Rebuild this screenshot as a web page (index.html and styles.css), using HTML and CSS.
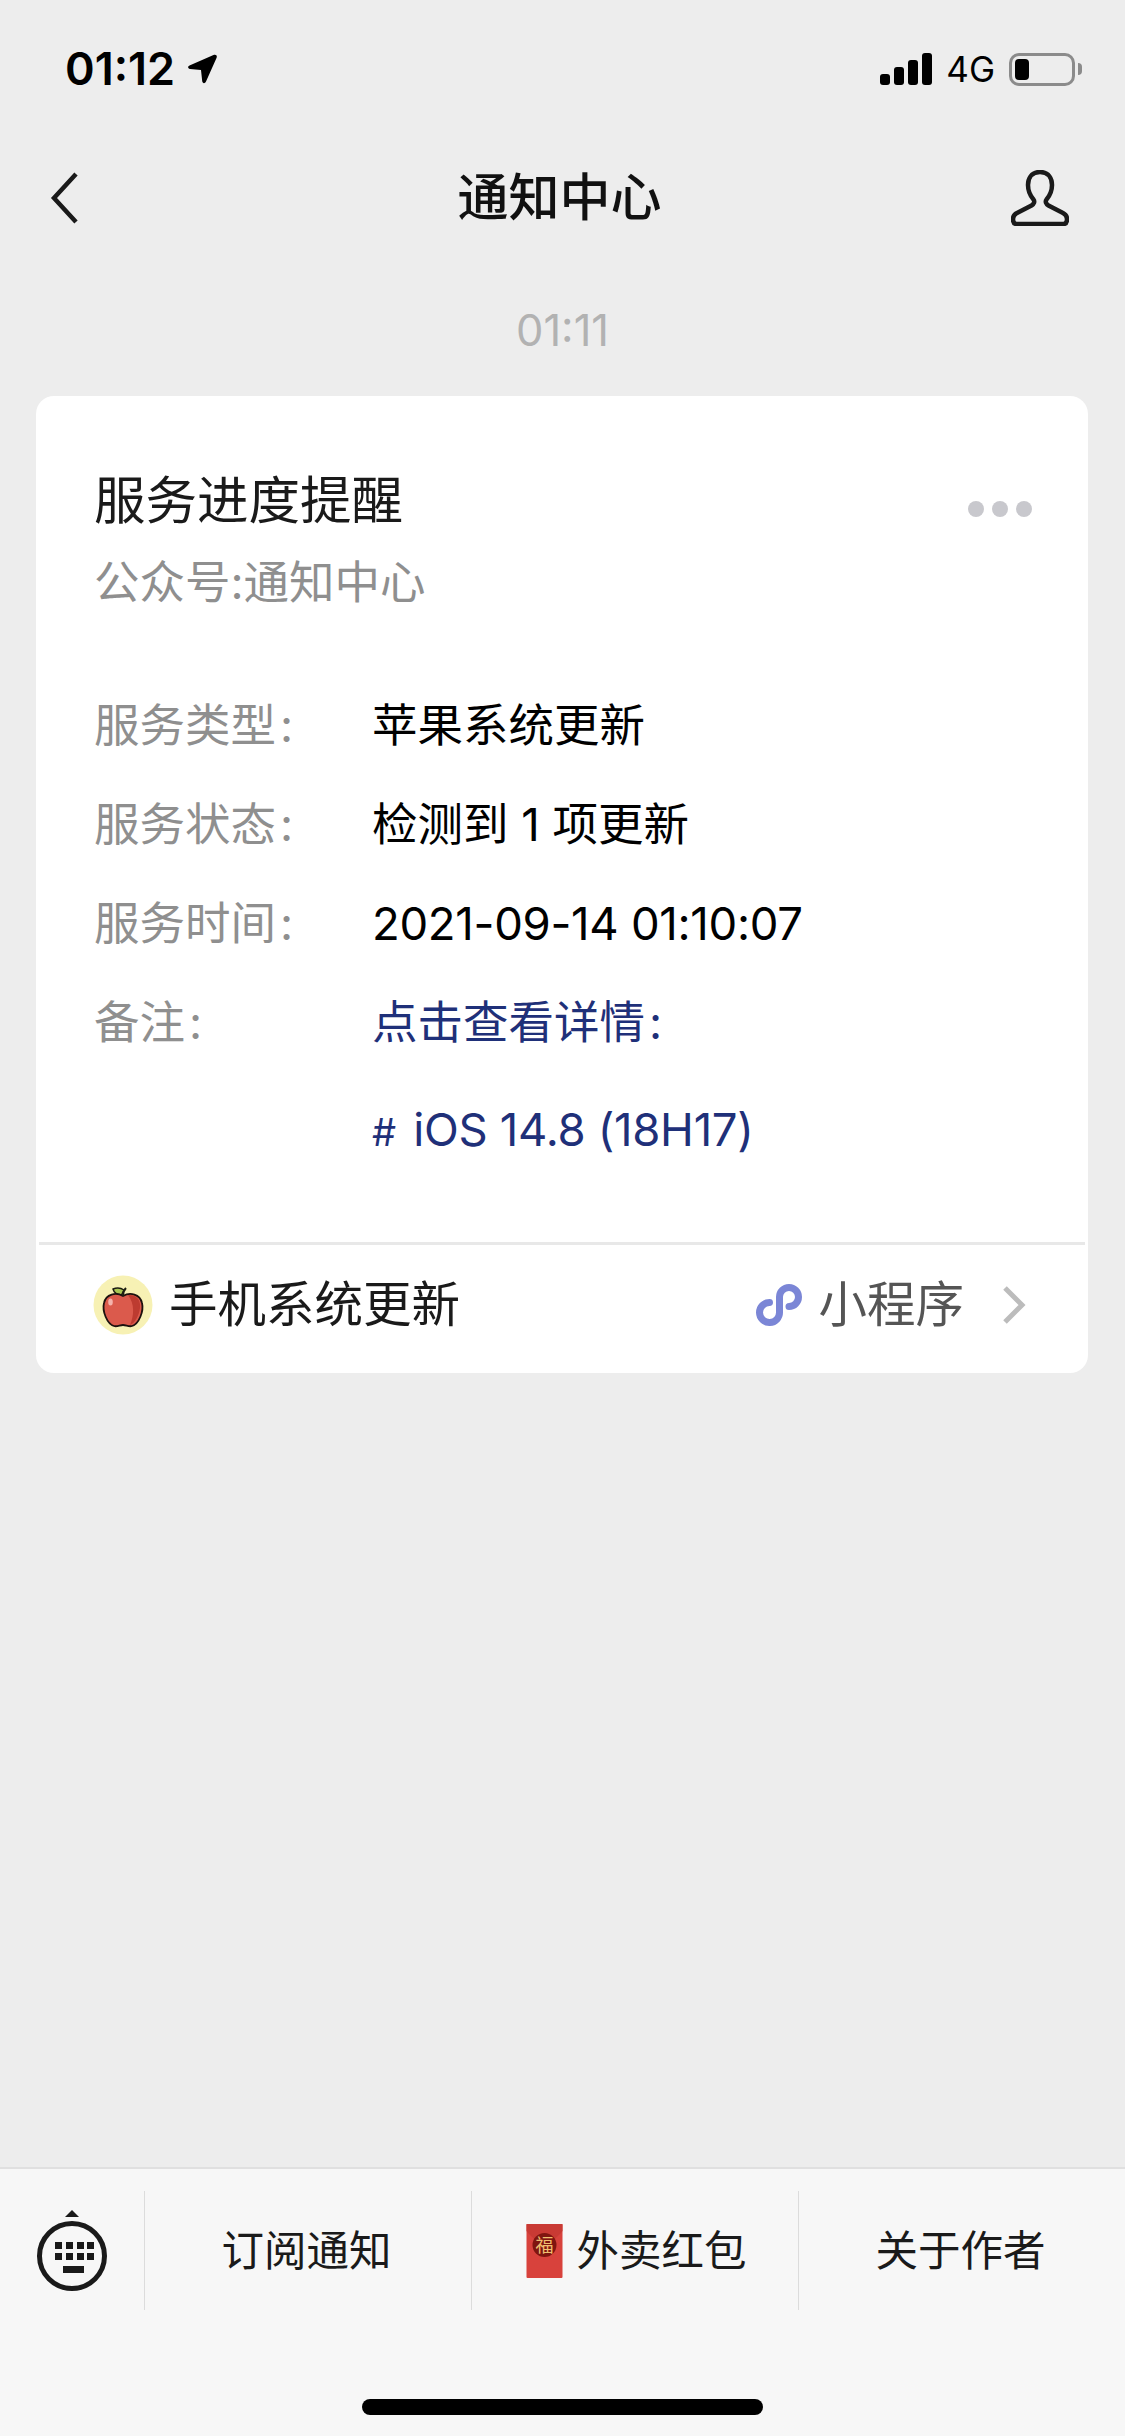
FILE: index.html
```html
<!DOCTYPE html>
<html lang="zh-CN">
<head>
<meta charset="utf-8">
<title>通知中心</title>
<link rel="stylesheet" href="styles.css">
</head>
<body>
<div class="phone">
  <header class="status">
    <div class="status-left">
      <span class="clock">01:12</span>
      <svg class="loc" viewBox="0 0 30 30"><path d="M1.500 11.500 25.500 1c2.500-1 4 .5 3 3L18 27.500c-1.200 2.500-3.500 2-3.800-.5L13 16l-11-1c-2.300-.3-2.500-2.500-.5-3.500z"/></svg>
    </div>
    <div class="status-right">
      <div class="signal"><i class="b1"></i><i class="b2"></i><i class="b3"></i><i class="b4"></i></div>
      <span class="net">4G</span>
      <div class="battery"><div class="battery-level"></div></div>
      <div class="battery-nub"></div>
    </div>
  </header>

  <nav class="nav">
    <svg class="back" viewBox="0 0 30 52"><path d="M26 2 4 26l22 24"/></svg>
    <h1 class="nav-title">通知中心</h1>
    <svg class="user" viewBox="0 0 58 56"><path d="M29 2c-9 0-12 7-12 13 0 6 2.500 11 5.500 14.500 1.500 2 .5 4.500-2 6L6 43c-3 1.500-4 3.500-4 6 0 3 .8 5 3.500 5h47c2.700 0 3.500-2 3.500-5 0-2.500-1-4.500-4-6l-14.500-7.500c-2.500-1.500-3.500-4-2-6C38.500 26 41 21 41 15c0-6-3-13-12-13z"/></svg>
  </nav>

  <div class="stamp">01:11</div>

  <section class="card">
    <div class="card-body">
      <div class="head">
        <div>
          <h2 class="title">服务进度提醒</h2>
          <p class="sub">公众号:通知中心</p>
        </div>
        <div class="dots"><i></i><i></i><i></i></div>
      </div>
      <dl class="rows">
        <dt class="label">服务类型<span class="colon">:</span></dt>
        <dd class="value">苹果系统更新</dd>
        <dt class="label">服务状态<span class="colon">:</span></dt>
        <dd class="value">检测到 1 项更新</dd>
        <dt class="label">服务时间<span class="colon">:</span></dt>
        <dd class="value num">2021-09-14 01:10:07</dd>
        <dt class="label">备注<span class="colon">:</span></dt>
        <dd class="value link">
          <div>点击查看详情<span class="colon">:</span></div>
          <div class="link-line num"><span class="hash">#</span> iOS 14.8 (18H17)</div>
        </dd>
      </dl>
    </div>
    <footer class="foot">
      <div class="app">
        <svg class="apple" viewBox="0 0 60 60">
          <circle cx="30" cy="30" r="29.500" fill="#f7f1b4"/>
          <path d="M31 15c-3-2-7-2.500-11-1 1 4 5 6 8.500 6z" fill="#a9c653" stroke="#1d1d12" stroke-width="1.500" stroke-linejoin="round"/>
          <path d="M30 21c-7-4-17-2-19 7-2 8 3 21 10 23 3 1 6-1 9-1s6 2 9 1c7-2 12-15 10-23-2-9-12-11-19-7z" fill="#db5a4c" stroke="#1d120f" stroke-width="1.800"/>
          <path d="M35 20c9-1 13 6 12 13-1 8-5 15-10 17 4-9 5-21-2-30z" fill="#bd3b30"/>
          <ellipse cx="17.500" cy="27" rx="2.300" ry="3.500" fill="#f5b3ac"/>
          <path d="M30 21c0-3 1-6 3-8" fill="none" stroke="#1d1d12" stroke-width="2"/>
        </svg>
        <span class="app-name">手机系统更新</span>
      </div>
      <div class="mini">
        <svg class="mini-icon" viewBox="0 0 47 42"><path d="M13.500 18.500A10 10 0 1 0 23.500 28V13A9.500 9.500 0 1 1 33 22.500"/></svg>
        <span class="mini-text">小程序</span>
        <svg class="chev" viewBox="0 0 24 40"><path d="M3 3l17 17L3 37"/></svg>
      </div>
    </footer>
  </section>

  <div class="spacer"></div>

  <footer class="menu">
    <div class="menu-kbd">
      <svg class="kbd" viewBox="0 0 72 88">
        <path class="kbd-arrow" d="M36 0l7 7H29z"/>
        <circle class="kbd-ring" cx="36" cy="46" r="32.500"/>
        <g class="kbd-key">
          <rect x="19" y="32" width="7" height="7"/><rect x="30" y="32" width="7" height="7"/><rect x="41" y="32" width="7" height="7"/><rect x="51" y="32" width="7" height="7"/>
          <rect x="19" y="43" width="7" height="7"/><rect x="30" y="43" width="7" height="7"/><rect x="41" y="43" width="7" height="7"/><rect x="51" y="43" width="7" height="7"/>
          <rect x="27" y="56" width="21" height="7"/>
        </g>
      </svg>
    </div>
    <div class="menu-item">订阅通知</div>
    <div class="menu-item menu-item-packet">
      <svg class="packet" viewBox="0 0 36 54">
        <rect width="36" height="54" rx="1" fill="#d8423c"/>
        <path d="M0 0h36v7C30 15 24 18 18 18S6 15 0 7z" fill="#c93a34"/>
        <circle cx="18" cy="21" r="12" fill="#7f1510"/>
        <text class="packet-text" x="18" y="28" text-anchor="middle">福</text>
      </svg>
      <span>外卖红包</span>
    </div>
    <div class="menu-item">关于作者</div>
  </footer>
  <div class="home-area"><div class="home-bar"></div></div>
</div>
</body>
</html>
```
FILE: styles.css
```css
* { box-sizing: border-box; }
html, body { margin: 0; padding: 0; }
body {
  background: #ededed;
  font-family: Inter, "Noto Sans CJK SC", "Liberation Sans", sans-serif;
  color: #111;
}
.phone {
  width: 1125px;
  height: 2436px;
  display: flex;
  flex-direction: column;
  overflow: hidden;
}

/* status bar */
.status {
  height: 138px;
  flex: none;
  padding: 0 43px 0 65px;
  display: flex;
  justify-content: space-between;
  align-items: center;
}
.status-left, .status-right { display: flex; align-items: center; }
.clock { font-size: 45px; font-weight: 600; color: #000; line-height: 50px; }
.loc { width: 30px; height: 30px; margin-left: 13px; fill: #000; }
.signal { display: flex; align-items: flex-end; gap: 4px; height: 32px; }
.signal i { display: block; width: 10px; background: #000; border-radius: 3px; }
.b1 { height: 11px; }
.b2 { height: 18px; }
.b3 { height: 25px; }
.b4 { height: 32px; }
.net { font-size: 35px; font-weight: 400; color: #000; margin: 0 14px; line-height: 40px; }
.battery {
  width: 66px;
  height: 33px;
  border: 3px solid #8b8b8b;
  border-radius: 10px;
  padding: 3px;
}
.battery-level { width: 14px; height: 100%; background: #000; border-radius: 4px; }
.battery-nub { width: 4px; height: 12px; margin-left: 3px; background: #8b8b8b; border-radius: 0 4px 4px 0; }

/* nav */
.nav {
  height: 120px;
  flex: none;
  padding: 0 56px 0 50px;
  display: grid;
  grid-template-columns: 1fr auto 1fr;
  align-items: center;
}
.back { width: 30px; height: 52px; fill: none; stroke: #1a1a1a; stroke-width: 4.500; }
.nav-title {
  margin: 0;
  text-align: center;
  font-size: 51px;
  line-height: 70px;
  font-weight: 500;
  color: #111;
}
.user { justify-self: end; width: 58px; height: 56px; fill: none; stroke: #1a1a1a; stroke-width: 4.500; }

.stamp {
  flex: none;
  height: 60px;
  margin-top: 42px;
  text-align: center;
  font-size: 43.500px;
  line-height: 60px;
  color: #b2b2b2;
}

/* card */
.card {
  flex: none;
  margin: 36px 37px 0 36px;
  background: #fff;
  border-radius: 18px;
}
.card-body { padding: 72px 56px 78px 58px; }
.head { display: flex; justify-content: space-between; align-items: flex-start; }
.title { margin: 0; font-size: 51.500px; line-height: 64px; font-weight: 400; color: #1a1a1a; }
.sub { margin: 21px 0 0; font-size: 45.500px; line-height: 60px; color: #8f8f8f; }
.dots { display: flex; gap: 8px; margin-top: 33px; }
.dots i { display: block; width: 16px; height: 16px; border-radius: 50%; background: #c8c8cd; }
.rows {
  margin: 81px 0 0;
  display: grid;
  grid-template-columns: 278px 1fr;
  row-gap: 35px;
}
.label { font-size: 45.500px; line-height: 64px; color: #8f8f8f; }
.value { margin: 0; font-size: 45.500px; line-height: 64px; color: #000; }
.num { letter-spacing: -0.300px; }
.colon { margin-left: 4px; }
.link { color: #1f3079; }
.link-line { margin-top: 43px; }
.hash { font-size: 38px; margin-right: 5px; }

/* card footer */
.foot {
  margin: 0 3px;
  height: 131px;
  border-top: 3px solid #e8e8e8;
  padding: 0 59px 8px 54px;
  display: flex;
  justify-content: space-between;
  align-items: center;
}
.app, .mini { display: flex; align-items: center; }
.apple { width: 60px; height: 60px; }
.app-name { margin-left: 16px; font-size: 48.500px; line-height: 64px; color: #1a1a1a; }
.mini-icon { width: 47px; height: 42px; fill: none; stroke: #7b86d6; stroke-width: 7; stroke-linecap: round; }
.mini-text { margin-left: 15px; font-size: 48.500px; line-height: 64px; color: #555; }
.chev { width: 24px; height: 40px; margin-left: 38px; fill: none; stroke: #bcbcbc; stroke-width: 5; }

.spacer { flex: 1; }

/* bottom menu */
.menu {
  flex: none;
  height: 168px;
  padding: 22px 0 25px;
  background: #f7f7f7;
  border-top: 2px solid #e0e0e0;
  display: flex;
}
.menu-kbd {
  width: 144px;
  flex: none;
  display: flex;
  justify-content: center;
  align-items: flex-end;
}
.kbd { width: 72px; height: 88px; margin-bottom: 12px; }
.kbd-arrow { fill: #1a1a1a; }
.kbd-ring { fill: none; stroke: #1a1a1a; stroke-width: 5; }
.kbd-key { fill: #1a1a1a; }
.menu-item {
  flex: none;
  width: 327px;
  border-left: 1px solid #dcdcdc;
  padding-right: 3px;
  display: flex;
  align-items: center;
  justify-content: center;
  gap: 13px;
  font-size: 42.500px;
  line-height: 60px;
  color: #1a1a1a;
}
.menu-item-packet { padding: 0 0 0 3px; }
.packet { width: 37px; height: 54px; }
.packet-text { font-size: 18px; fill: #f0c070; }
.home-area {
  flex: none;
  height: 101px;
  background: #f7f7f7;
  display: flex;
  justify-content: center;
  padding-top: 64px;
}
.home-bar { width: 401px; height: 16px; border-radius: 8px; background: #000; }
```
